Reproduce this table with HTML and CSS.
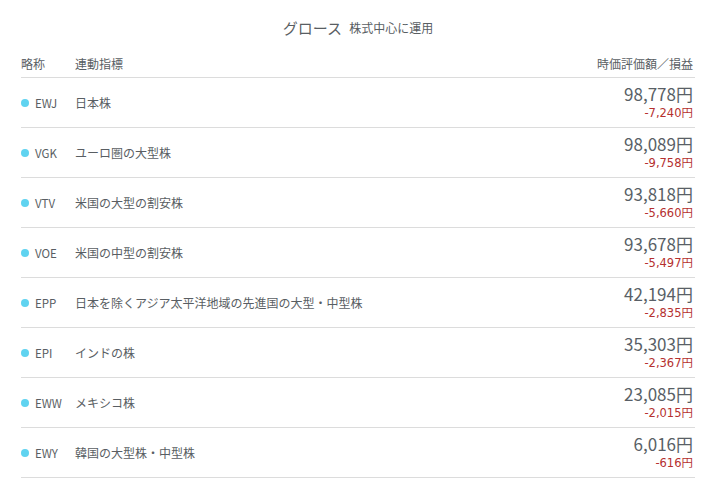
FILE: index.html
```html
<!DOCTYPE html>
<html lang="ja">
<head>
<meta charset="utf-8">
<link rel="stylesheet" href="styles.css">
</head>
<body>
<div class="wrap">
  <div class="title"><span class="t-main">グロース</span><span class="t-sub">株式中心に運用</span></div>
  <div class="head">
    <span class="h-code">略称</span>
    <span class="h-name">連動指標</span>
    <span class="h-val">時価評価額／損益</span>
  </div>
  <div class="row"><span class="dot"></span><span class="code">EWJ</span><span class="name">日本株</span><div class="val"><span class="big">98,778円</span><span class="pl">-7,240円</span></div></div>
  <div class="row"><span class="dot"></span><span class="code">VGK</span><span class="name">ユーロ圏の大型株</span><div class="val"><span class="big">98,089円</span><span class="pl">-9,758円</span></div></div>
  <div class="row"><span class="dot"></span><span class="code">VTV</span><span class="name">米国の大型の割安株</span><div class="val"><span class="big">93,818円</span><span class="pl">-5,660円</span></div></div>
  <div class="row"><span class="dot"></span><span class="code">VOE</span><span class="name">米国の中型の割安株</span><div class="val"><span class="big">93,678円</span><span class="pl">-5,497円</span></div></div>
  <div class="row"><span class="dot"></span><span class="code">EPP</span><span class="name">日本を除くアジア太平洋地域の先進国の大型・中型株</span><div class="val"><span class="big">42,194円</span><span class="pl">-2,835円</span></div></div>
  <div class="row"><span class="dot"></span><span class="code">EPI</span><span class="name">インドの株</span><div class="val"><span class="big">35,303円</span><span class="pl">-2,367円</span></div></div>
  <div class="row"><span class="dot"></span><span class="code">EWW</span><span class="name">メキシコ株</span><div class="val"><span class="big">23,085円</span><span class="pl">-2,015円</span></div></div>
  <div class="row"><span class="dot"></span><span class="code">EWY</span><span class="name">韓国の大型株・中型株</span><div class="val"><span class="big">6,016円</span><span class="pl">-616円</span></div></div>
</div>
</body>
</html>
```

FILE: styles.css
```css
html, body {
  margin: 0;
  padding: 0;
  background: #ffffff;
}
body {
  font-family: "Noto Sans CJK JP", "Noto Sans", sans-serif;
  color: #595e63;
}
.wrap {
  width: 674px;
  margin-left: 21px;
}
.title {
  height: 48px;
  display: flex;
  justify-content: center;
  align-items: center;
  padding-top: 6px;
  box-sizing: border-box;
}
.t-main {
  font-size: 15px;
  margin-right: 7px;
}
.t-sub {
  font-size: 12px;
}
.head {
  height: 30px;
  display: flex;
  align-items: center;
  font-size: 12px;
  border-bottom: 1px solid #dcdcdc;
  box-sizing: border-box;
  padding-top: 2px;
  padding-right: 2px;
}
.h-code { width: 54px; }
.h-name { flex: 1; }
.row {
  height: 50px;
  display: flex;
  align-items: center;
  border-bottom: 1px solid #dcdcdc;
  box-sizing: border-box;
  font-size: 12px;
  padding-right: 2px;
}
.dot {
  width: 8px;
  height: 8px;
  border-radius: 50%;
  background: #5fd3f0;
  margin-top: 1px;
  margin-right: 6px;
}
.code {
  width: 40px;
  font-size: 11.5px;
}
.name {
  flex: 1;
}
.val {
  display: flex;
  flex-direction: column;
  align-items: flex-end;
}
.big {
  font-size: 17px;
  line-height: 18px;
  color: #595f66;
}
.pl {
  font-family: "DejaVu Sans", "Noto Sans CJK JP", sans-serif;
  font-size: 11.5px;
  line-height: 14px;
  margin-top: 3px;
  color: #b5302f;
}
```
